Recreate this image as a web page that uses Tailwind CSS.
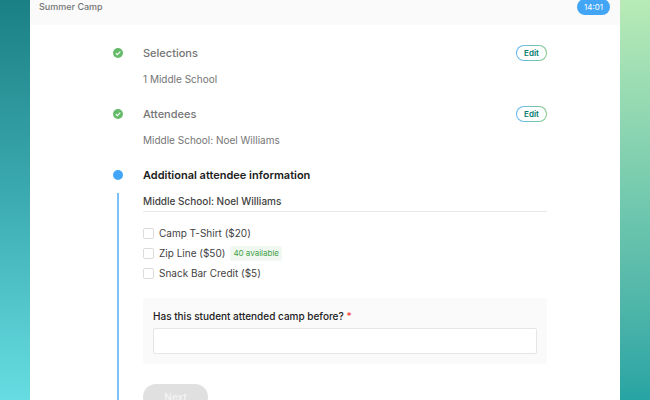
<!DOCTYPE html>
<html lang="en">
<head>
    <meta charset="UTF-8">
    <meta name="viewport" content="width=device-width, initial-scale=1.0">
    <title>Summer Camp</title>
    <script src="https://cdn.jsdelivr.net/npm/@tailwindcss/browser@4"></script>
</head>
<body class="font-['Inter',sans-serif] text-[10px] leading-4 text-[#757575]">
    <div class="flex h-screen overflow-hidden">
        <div class="w-[30px] shrink-0 bg-linear-to-b from-[#1a8085] via-[#3cacb2] to-[#66dde2]"></div>
        <div class="flex flex-1 flex-col bg-white">
            <header class="flex h-[25px] shrink-0 items-end justify-between bg-[#fafafa] pr-[10px] pb-[10px] pl-[9px]">
                <div class="text-[9px] leading-4 font-medium">Summer Camp</div>
                <div class="flex h-4 w-[33px] items-center justify-center rounded-full bg-[#42a5f5] text-[8px] text-white">14:01</div>
            </header>
            <main class="flex flex-1 flex-col pt-5 pr-[73px] pl-[83px]">
                <section class="flex gap-5 pb-[19px]">
                    <svg class="mt-[3px] size-[10px] shrink-0" viewBox="0 0 20 20">
                        <circle cx="10" cy="10" r="10" fill="#66bb6a"/>
                        <path d="M5.5 10.2l3.1 3.1 6-6" fill="none" stroke="#fff" stroke-width="2.2"/>
                    </svg>
                    <div class="flex-1">
                        <div class="flex items-center justify-between">
                            <h2 class="text-[11px] leading-4 font-medium">Selections</h2>
                            <button class="h-4 w-[31px] cursor-pointer rounded-full bg-linear-to-r from-[#64b5f6] to-[#81c784] p-px"><span class="flex h-full items-center justify-center rounded-full bg-white text-[8px] font-semibold text-[#00796b]">Edit</span></button>
                        </div>
                        <p class="mt-[10px]">1 Middle School</p>
                    </div>
                </section>
                <section class="flex gap-5 pb-[19px]">
                    <svg class="mt-[3px] size-[10px] shrink-0" viewBox="0 0 20 20">
                        <circle cx="10" cy="10" r="10" fill="#66bb6a"/>
                        <path d="M5.5 10.2l3.1 3.1 6-6" fill="none" stroke="#fff" stroke-width="2.2"/>
                    </svg>
                    <div class="flex-1">
                        <div class="flex items-center justify-between">
                            <h2 class="text-[11px] leading-4 font-medium">Attendees</h2>
                            <button class="h-4 w-[31px] cursor-pointer rounded-full bg-linear-to-r from-[#64b5f6] to-[#81c784] p-px"><span class="flex h-full items-center justify-center rounded-full bg-white text-[8px] font-semibold text-[#00796b]">Edit</span></button>
                        </div>
                        <p class="mt-[10px]">Middle School: Noel Williams</p>
                    </div>
                </section>
                <section class="flex flex-1 gap-5 text-[#424242]">
                    <div class="flex w-[10px] shrink-0 flex-col items-center pt-[3px]">
                        <div class="size-[10px] shrink-0 rounded-full bg-[#42a5f5]"></div>
                        <div class="mt-[13px] w-[2px] flex-1 bg-[#7cc0fa]"></div>
                    </div>
                    <form class="flex-1">
                        <h2 class="text-[11px] leading-4 font-semibold text-[#212121]">Additional attendee information</h2>
                        <p class="mt-[10px] border-b border-[#e8e8e8] pb-[2px] font-medium">Middle School: Noel Williams</p>
                        <div class="mt-[13px] flex flex-col gap-1">
                            <label class="flex h-4 items-center gap-[5px]">
                                <input type="checkbox" class="size-[11px] appearance-none rounded-[2px] border border-[#dcdcdc] bg-white checked:bg-[#42a5f5]">
                                Camp T-Shirt ($20)
                            </label>
                            <label class="flex h-4 items-center gap-[5px]">
                                <input type="checkbox" class="size-[11px] appearance-none rounded-[2px] border border-[#dcdcdc] bg-white checked:bg-[#42a5f5]">
                                Zip Line ($50)
                                <span class="rounded-[2px] bg-[#f0f8f1] px-[3px] text-[8px] leading-[15px] text-[#43a047]">40 available</span>
                            </label>
                            <label class="flex h-4 items-center gap-[5px]">
                                <input type="checkbox" class="size-[11px] appearance-none rounded-[2px] border border-[#dcdcdc] bg-white checked:bg-[#42a5f5]">
                                Snack Bar Credit ($5)
                            </label>
                        </div>
                        <div class="mt-[17px] rounded-[2px] bg-[#fafafa] p-[10px]">
                            <label for="attended" class="block font-medium text-[#212121]">Has this student attended camp before? <span class="text-[#f44336]">*</span></label>
                            <input id="attended" type="text" required class="mt-1 block h-[26px] w-full rounded-[2px] border border-[#e6e6e6] bg-white px-2 outline-none">
                        </div>
                        <button type="button" disabled class="mt-5 h-[26px] w-[65px] rounded-full bg-[#e0e0e0] text-[10px] font-medium text-[#f5f5f5]">Next</button>
                    </form>
                </section>
            </main>
        </div>
        <div class="w-[30px] shrink-0 bg-linear-to-b from-[#b8ebb6] via-[#72c9ae] to-[#26a4a4]"></div>
    </div>
</body>
</html>
